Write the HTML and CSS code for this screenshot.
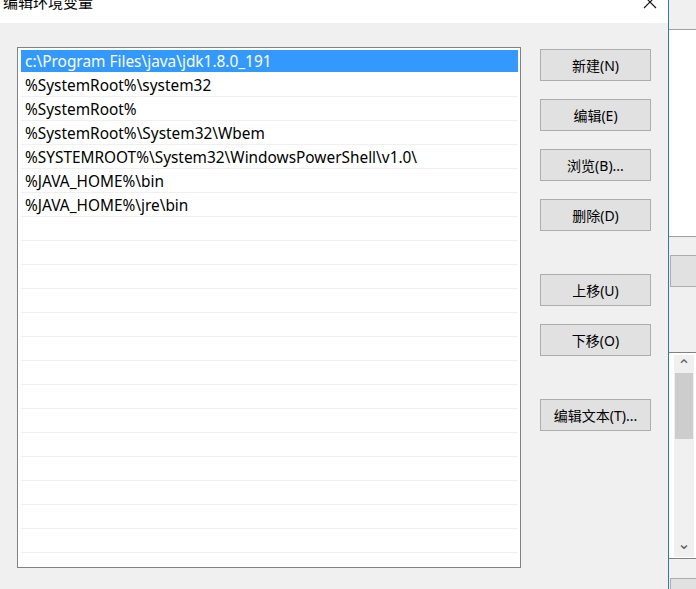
FILE: index.html
```html
<!DOCTYPE html>
<html lang="zh-CN">
<head>
  <meta charset="UTF-8" />
  <title>编辑环境变量</title>
  <link rel="stylesheet" href="styles.css">
</head>
<body>
  <div class="dialog">
    <div class="titlebar">
      <span class="title">编辑环境变量</span>
      <span class="close">
        <svg width="14" height="14" viewBox="0 0 14 14"><path d="M1 -4 L13 8 M13 -4 L1 8" stroke="#111" stroke-width="1.1" fill="none"/></svg>
      </span>
    </div>

    <div class="content">
      <div class="pathlist">
        <div class="row selected">c:\Program Files\java\jdk1.8.0_191</div>
        <div class="row">%SystemRoot%\system32</div>
        <div class="row">%SystemRoot%</div>
        <div class="row">%SystemRoot%\System32\Wbem</div>
        <div class="row">%SYSTEMROOT%\System32\WindowsPowerShell\v1.0\</div>
        <div class="row">%JAVA_HOME%\bin</div>
        <div class="row">%JAVA_HOME%\jre\bin</div>
        <div class="row"></div>
        <div class="row"></div>
        <div class="row"></div>
        <div class="row"></div>
        <div class="row"></div>
        <div class="row"></div>
        <div class="row"></div>
        <div class="row"></div>
        <div class="row"></div>
        <div class="row"></div>
        <div class="row"></div>
        <div class="row"></div>
        <div class="row"></div>
        <div class="row"></div>
        <div class="row"></div>
      </div>

      <div class="actions">
        <button class="btn">新建(N)</button>
        <button class="btn">编辑(E)</button>
        <button class="btn">浏览(B)...</button>
        <button class="btn">删除(D)</button>
        <button class="btn gap">上移(U)</button>
        <button class="btn">下移(O)</button>
        <button class="btn gap">编辑文本(T)...</button>
      </div>
    </div>
  </div>

  <div class="edge"></div>

  <!-- window behind the dialog -->
  <div class="behind">
    <div class="b-top"></div>
    <div class="b-white"></div>
    <div class="b-btn"></div>
    <div class="b-mid"></div>
    <div class="b-list">
      <div class="scroll">
        <span class="arrow">&#8963;</span>
        <div class="thumb"></div>
        <div class="track"></div>
        <span class="arrow down">&#8964;</span>
      </div>
    </div>
    <div class="b-btn last"></div>
  </div>
</body>
</html>
```

FILE: styles.css
```css
* {
  box-sizing: border-box;
}

body {
  margin: 0;
  height: 589px;
  overflow: hidden;
  display: flex;
  font-family: "Noto Sans", "Noto Sans CJK SC", sans-serif;
  color: #000;
  background: #f0f0f0;
}

.dialog {
  width: 668px;
  flex: none;
  background: #f0f0f0;
}

.titlebar {
  height: 23px;
  background: #fff;
  display: flex;
  justify-content: space-between;
  overflow: hidden;
}

.title {
  font-size: 15px;
  margin: -9px 0 0 3px;
  color: #000;
}

.close {
  margin: 0 6px 0 0;
  width: 24px;
  display: flex;
  justify-content: center;
}

.content {
  display: flex;
  padding: 24px 0 0 17px;
}

.pathlist {
  width: 504px;
  height: 521px;
  border: 1px solid #828282;
  background: #fff;
  padding: 1px 2px 0 3px;
  overflow: hidden;
}

.row {
  height: 24px;
  border-bottom: 1px solid #f0f0f0;
  font-size: 15.4px;
  line-height: 25px;
  padding-left: 4px;
  white-space: nowrap;
}

.row.selected {
  background: #3399ff;
  color: #fff;
  border-bottom-color: #fff;
  margin-top: 1px;
  height: 23px;
  line-height: 24px;
}

.actions {
  display: flex;
  flex-direction: column;
  gap: 18px;
  margin-left: 19px;
  padding-top: 2px;
}

.btn {
  width: 111px;
  height: 32px;
  background: #e1e1e1;
  border: 1px solid #adadad;
  font-family: "Noto Sans", "Noto Sans CJK SC", sans-serif;
  font-size: 14px;
  color: #000;
  padding: 0;
}

.btn.gap {
  margin-top: 25px;
}

.edge {
  width: 1px;
  flex: none;
  background: #2e78b8;
}

.behind {
  flex: 1;
  display: flex;
  flex-direction: column;
  background: #f0f0f0;
}

.behind > div {
  flex: none;
}

.b-top {
  height: 30px;
  border-bottom: 1px solid #a0a0a0;
}

.b-white {
  height: 207px;
  background: #fff;
  border-bottom: 1px solid #a0a0a0;
}

.b-btn {
  height: 32px;
  margin: 18px 0 0 1px;
  background: #e1e1e1;
  border: 1px solid #adadad;
  border-right: none;
}

.b-btn.last {
  margin-top: 19px;
}

.b-mid {
  height: 65px;
}

.b-list {
  height: 207px;
  border-top: 1px solid #828282;
  border-bottom: 1px solid #828282;
  background: #fff;
  padding: 2px 0 0 5px;
}

.scroll {
  width: 20px;
  height: 202px;
  background: #f0f0f0;
  display: flex;
  flex-direction: column;
  align-items: center;
}

.arrow {
  height: 18px;
  font-size: 16px;
  line-height: 22px;
  color: #606060;
  font-family: "DejaVu Sans", sans-serif;
}

.arrow.down {
  line-height: 10px;
}

.thumb {
  width: 18px;
  height: 66px;
  background: #cdcdcd;
}

.track {
  flex: 1;
}
```
